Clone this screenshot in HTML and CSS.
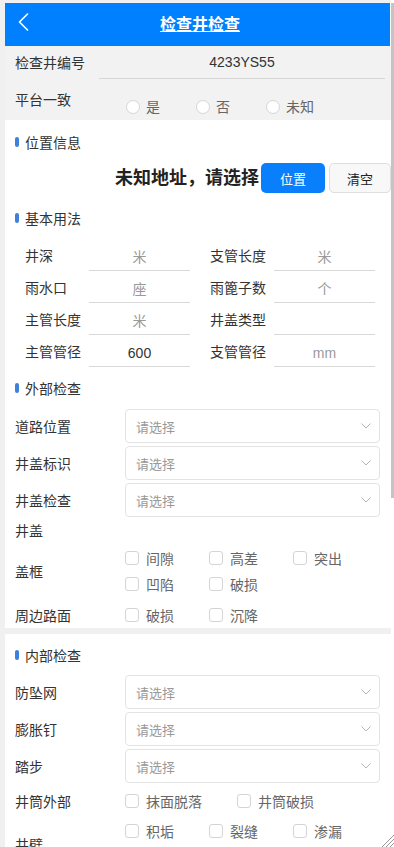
FILE: index.html
```html
<!DOCTYPE html>
<html lang="zh-CN">
<head>
<meta charset="utf-8">
<title>检查井检查</title>
<link rel="stylesheet" href="styles.css">
</head>
<body>
<div class="page">
  <header class="topbar">
    <span class="back">
      <svg width="11" height="18" viewBox="0 0 11 18"><path d="M9.5 1 L1.5 9 L9.5 17" fill="none" stroke="#fff" stroke-width="1.6" stroke-linecap="round" stroke-linejoin="round"/></svg>
    </span>
    <h1 class="title"><a class="title-link">检查井检查</a></h1>
  </header>

  <div class="idarea">
    <div class="row-id">
      <span class="lbl">检查井编号</span>
      <div class="id-value">4233YS55</div>
    </div>
    <div class="row-radio">
      <span class="lbl">平台一致</span>
      <div class="radios">
        <label class="opt"><span class="circle"></span>是</label>
        <label class="opt"><span class="circle"></span>否</label>
        <label class="opt"><span class="circle"></span>未知</label>
      </div>
    </div>
  </div>

  <section class="sec">
    <div class="sec-title sec-first">位置信息</div>
    <div class="addr-row">
      <span class="addr">未知地址，请选择</span>
      <button class="btn btn-primary">位置</button>
      <button class="btn btn-plain">清空</button>
    </div>

    <div class="sec-title sec-basic">基本用法</div>
    <div class="grid">
      <div class="cell"><span class="glbl">井深</span><input class="ginput" placeholder="米"></div>
      <div class="cell"><span class="glbl">支管长度</span><input class="ginput" placeholder="米"></div>
      <div class="cell"><span class="glbl">雨水口</span><input class="ginput" placeholder="座"></div>
      <div class="cell"><span class="glbl">雨篦子数</span><input class="ginput" placeholder="个"></div>
      <div class="cell"><span class="glbl">主管长度</span><input class="ginput" placeholder="米"></div>
      <div class="cell"><span class="glbl">井盖类型</span><input class="ginput" placeholder=""></div>
      <div class="cell"><span class="glbl">主管管径</span><input class="ginput" value="600"></div>
      <div class="cell"><span class="glbl">支管管径</span><input class="ginput" placeholder="mm"></div>
    </div>

    <div class="sec-title">外部检查</div>
    <div class="selects">
      <div class="sel-row"><span class="slbl">道路位置</span><div class="select">请选择<svg class="chev" width="10" height="6" viewBox="0 0 10 6"><path d="M0.5 0.5 L5 5 L9.5 0.5" fill="none" stroke="#b5b5b5" stroke-width="1"/></svg></div></div>
      <div class="sel-row"><span class="slbl">井盖标识</span><div class="select">请选择<svg class="chev" width="10" height="6" viewBox="0 0 10 6"><path d="M0.5 0.5 L5 5 L9.5 0.5" fill="none" stroke="#b5b5b5" stroke-width="1"/></svg></div></div>
      <div class="sel-row"><span class="slbl">井盖检查</span><div class="select">请选择<svg class="chev" width="10" height="6" viewBox="0 0 10 6"><path d="M0.5 0.5 L5 5 L9.5 0.5" fill="none" stroke="#b5b5b5" stroke-width="1"/></svg></div></div>
    </div>
    <div class="row-plain">井盖</div>
    <div class="chk-row">
      <span class="clbl">盖框</span>
      <div class="chks">
        <label class="chk"><span class="box"></span>间隙</label>
        <label class="chk"><span class="box"></span>高差</label>
        <label class="chk"><span class="box"></span>突出</label>
        <label class="chk"><span class="box"></span>凹陷</label>
        <label class="chk"><span class="box"></span>破损</label>
      </div>
    </div>
    <div class="chk-row chk-gap">
      <span class="clbl">周边路面</span>
      <div class="chks">
        <label class="chk"><span class="box"></span>破损</label>
        <label class="chk"><span class="box"></span>沉降</label>
      </div>
    </div>
  </section>

  <div class="sep"></div>

  <section class="sec">
    <div class="sec-title sec-inner">内部检查</div>
    <div class="selects">
      <div class="sel-row"><span class="slbl">防坠网</span><div class="select">请选择<svg class="chev" width="10" height="6" viewBox="0 0 10 6"><path d="M0.5 0.5 L5 5 L9.5 0.5" fill="none" stroke="#b5b5b5" stroke-width="1"/></svg></div></div>
      <div class="sel-row"><span class="slbl">膨胀钉</span><div class="select">请选择<svg class="chev" width="10" height="6" viewBox="0 0 10 6"><path d="M0.5 0.5 L5 5 L9.5 0.5" fill="none" stroke="#b5b5b5" stroke-width="1"/></svg></div></div>
      <div class="sel-row"><span class="slbl">踏步</span><div class="select">请选择<svg class="chev" width="10" height="6" viewBox="0 0 10 6"><path d="M0.5 0.5 L5 5 L9.5 0.5" fill="none" stroke="#b5b5b5" stroke-width="1"/></svg></div></div>
    </div>
    <div class="chk-row chk-gap">
      <span class="clbl">井筒外部</span>
      <div class="chks">
        <label class="chk"><span class="box"></span>抹面脱落</label>
        <label class="chk"><span class="box"></span>井筒破损</label>
      </div>
    </div>
    <div class="chk-row chk-gap2">
      <span class="clbl">井壁</span>
      <div class="chks chks-tall">
        <label class="chk"><span class="box"></span>积垢</label>
        <label class="chk"><span class="box"></span>裂缝</label>
        <label class="chk"><span class="box"></span>渗漏</label>
      </div>
    </div>
  </section>
</div>

<div class="scrollbar"><div class="thumb"></div></div>
<svg class="grip" width="13" height="13" viewBox="0 0 13 13">
  <path d="M13 1 L1 13 M13 5 L5 13 M13 9 L9 13" stroke="#9a9a9a" stroke-width="1"/>
</svg>
</body>
</html>
```

FILE: styles.css
```css
* {
  box-sizing: border-box;
  margin: 0;
  padding: 0;
}

html,
body {
  height: 100%;
  overflow: hidden;
}

body {
  position: relative;
  background: #f0f0f0;
  font-family: "Liberation Sans", "Noto Sans CJK SC", sans-serif;
  font-size: 14px;
  color: #333;
}

.page {
  margin: 3px 3px 0 5px;
  min-height: 844px;
  background: #fff;
}

/* header */
.topbar {
  display: flex;
  align-items: center;
  height: 43px;
  margin-right: 1px;
  background: #0080ff;
}

.back {
  align-self: flex-start;
  width: 36px;
  padding: 10px 0 0 13px;
  line-height: 0;
}

.title {
  flex: 1;
  padding-right: 31px;
  text-align: center;
  font-size: 16px;
  line-height: 20px;
  font-weight: bold;
}

.title-link {
  color: #fff;
  text-decoration: underline;
}

/* id area */
.idarea {
  background: #f2f2f2;
  padding: 0 6px 0 10px;
}

.row-id {
  display: flex;
  height: 34px;
}

.row-id .lbl {
  width: 84px;
  line-height: 34px;
}

.id-value {
  flex: 1;
  height: 33px;
  border-bottom: 1px solid #d6d6d6;
  text-align: center;
  line-height: 32px;
}

.row-radio {
  display: flex;
  height: 40px;
}

.row-radio .lbl {
  width: 111px;
  padding-top: 10px;
  line-height: 20px;
}

.radios {
  display: flex;
  column-gap: 36px;
  margin-top: 17px;
  height: 20px;
}

.opt {
  display: flex;
  align-items: center;
  color: #666;
  line-height: 20px;
}

.circle {
  width: 14px;
  height: 14px;
  margin-right: 6px;
  border: 1px solid #d6d6d6;
  border-radius: 50%;
  background: #fff;
}

/* sections */
.sec {
  padding: 0 11px 0 10px;
}

.sec-title {
  display: flex;
  align-items: center;
  height: 42px;
  font-size: 14px;
  color: #333;
}

.sec-title::before {
  content: "";
  width: 4px;
  height: 10px;
  margin-right: 6px;
  border-radius: 2px;
  background: #3f80dc;
}

.sec-first {
  margin-top: 1px;
}

.sec-basic {
  margin-top: 4px;
}

.sec-inner {
  height: 41px;
}

/* address */
.addr-row {
  display: flex;
  align-items: center;
  justify-content: flex-end;
  height: 30px;
  margin-right: -11px;
}

.addr {
  margin-right: 2px;
  font-size: 18px;
  font-weight: bold;
  color: #222;
  line-height: 30px;
}

.btn {
  height: 30px;
  border-radius: 5px;
  font-family: "Liberation Sans", "Noto Sans CJK SC", sans-serif;
  font-size: 13px;
}

.btn-primary {
  width: 64px;
  border: none;
  background: #0a7ffc;
  color: #fff;
}

.btn-plain {
  width: 62px;
  margin-left: 4px;
  border: 1px solid #dedede;
  background: #f8f8f8;
  color: #222;
}

/* basic grid */
.grid {
  display: grid;
  grid-template-columns: 165px 165px;
  column-gap: 20px;
  padding-left: 10px;
}

.cell {
  display: flex;
  height: 32px;
  padding-top: 4px;
}

.glbl {
  width: 64px;
  line-height: 27px;
  color: #333;
}

.ginput {
  width: 101px;
  height: 28px;
  border: none;
  border-bottom: 1px solid #d9d9d9;
  outline: none;
  background: transparent;
  text-align: center;
  font-family: "Liberation Sans", "Noto Sans CJK SC", sans-serif;
  font-size: 14px;
  color: #333;
}

.ginput::placeholder {
  color: #9a9a9a;
}

/* selects */
.selects {
  display: flex;
  flex-direction: column;
  row-gap: 3px;
}

.sel-row {
  display: flex;
  align-items: center;
  height: 34px;
}

.slbl {
  width: 110px;
}

.select {
  display: flex;
  align-items: center;
  justify-content: space-between;
  flex: 1;
  height: 34px;
  padding: 0 8px 0 10px;
  border: 1px solid #e3e3e3;
  border-radius: 4px;
  font-size: 13px;
  color: #999;
}

/* checkbox rows */
.row-plain {
  height: 28px;
  line-height: 28px;
}

.chk-row {
  display: flex;
  align-items: center;
}

.chk-gap {
  margin-top: 5px;
}

.chk-gap2 {
  margin-top: 4px;
}

.clbl {
  width: 110px;
  flex-shrink: 0;
}

.chks {
  display: flex;
  flex-wrap: wrap;
  align-content: flex-start;
  column-gap: 35px;
  flex: 1;
}

.chks-tall {
  min-height: 52px;
}

.chk {
  display: flex;
  align-items: center;
  height: 26px;
  color: #666;
}

.box {
  width: 14px;
  height: 14px;
  margin-right: 7px;
  border: 1px solid #d4d4d4;
  border-radius: 3px;
  background: #fff;
}

.sep {
  height: 6px;
  background: #f0f0f0;
}

/* overlays */
.scrollbar {
  position: absolute;
  top: 0;
  right: 0;
  width: 3px;
  height: 100%;
  background: #fff;
}

.thumb {
  margin-top: 3px;
  height: 495px;
  background: #c4c4c4;
}

.grip {
  position: absolute;
  right: 0;
  bottom: 0;
}
```
